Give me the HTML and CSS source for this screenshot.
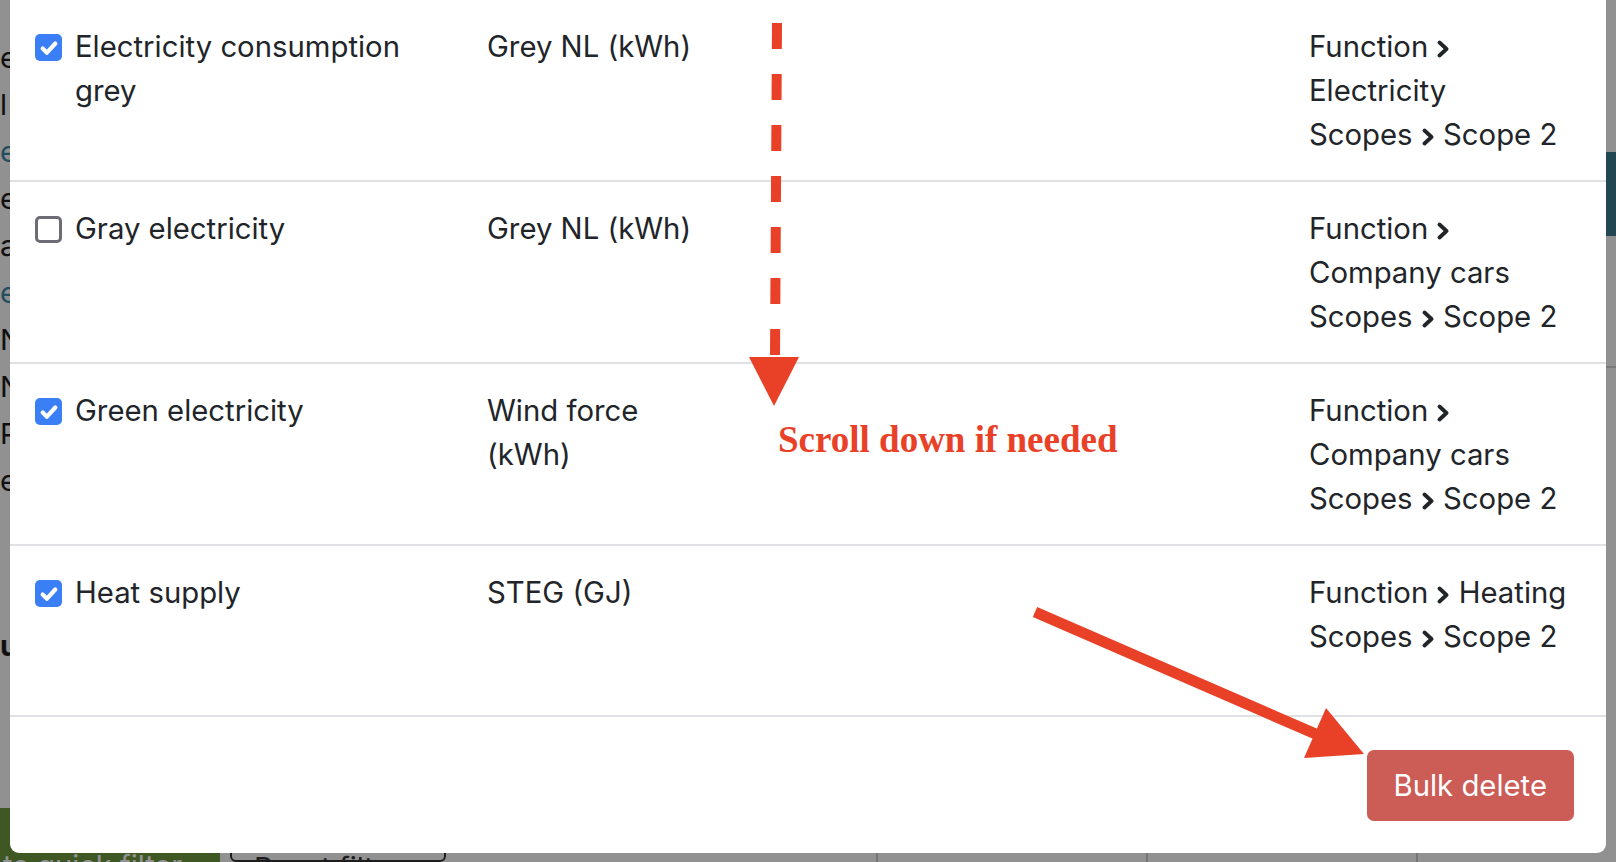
FILE: index.html
```html
<!DOCTYPE html>
<html lang="en">
<head>
<meta charset="utf-8">
<title>Bulk delete</title>
<link rel="stylesheet" href="styles.css">
</head>
<body>
<div class="page">
  <div class="page-main">
    <ul class="labels">
      <li>e</li>
      <li>l</li>
      <li class="link">e</li>
      <li>e</li>
      <li>as</li>
      <li class="link">e</li>
      <li>N</li>
      <li>N</li>
      <li>PC</li>
      <li>et</li>
      <li class="gap"></li>
      <li class="strong">u</li>
    </ul>
    <div class="page-fill"></div>
    <div class="page-right">
      <div class="teal"></div>
      <div class="rule"></div>
    </div>
  </div>
  <div class="toolbar">
    <span class="btn-green">Create quick filter</span>
    <span class="btn-reset">Reset filters</span>
    <span class="cell"></span>
    <span class="cell"></span>
    <span class="cell"></span>
  </div>
</div>

<div class="backdrop"></div>

<div class="modal">
  <div class="modal-body">
    <div class="row">
      <div class="name"><span class="check on"><svg viewBox="0 0 16 16"><path d="M3.8 8.3l2.8 2.8 5.6-6.1"/></svg></span><span class="label">Electricity consumption grey</span></div>
      <div class="src"><span class="src-text">Grey NL (kWh)</span></div>
      <div class="tags">
        <div class="tag">Function <svg class="chev" viewBox="0 0 14 18"><path d="M3.5 2.5l7 6.5-7 6.5"/></svg> Electricity</div>
        <div class="tag">Scopes <svg class="chev" viewBox="0 0 14 18"><path d="M3.5 2.5l7 6.5-7 6.5"/></svg> Scope 2</div>
      </div>
    </div>
    <div class="row">
      <div class="name"><span class="check"></span><span class="label">Gray electricity</span></div>
      <div class="src"><span class="src-text">Grey NL (kWh)</span></div>
      <div class="tags">
        <div class="tag">Function <svg class="chev" viewBox="0 0 14 18"><path d="M3.5 2.5l7 6.5-7 6.5"/></svg> Company cars</div>
        <div class="tag">Scopes <svg class="chev" viewBox="0 0 14 18"><path d="M3.5 2.5l7 6.5-7 6.5"/></svg> Scope 2</div>
      </div>
    </div>
    <div class="row">
      <div class="name"><span class="check on"><svg viewBox="0 0 16 16"><path d="M3.8 8.3l2.8 2.8 5.6-6.1"/></svg></span><span class="label">Green electricity</span></div>
      <div class="src"><span class="src-text">Wind force (kWh)</span></div>
      <div class="tags">
        <div class="tag">Function <svg class="chev" viewBox="0 0 14 18"><path d="M3.5 2.5l7 6.5-7 6.5"/></svg> Company cars</div>
        <div class="tag">Scopes <svg class="chev" viewBox="0 0 14 18"><path d="M3.5 2.5l7 6.5-7 6.5"/></svg> Scope 2</div>
      </div>
    </div>
    <div class="row last">
      <div class="name"><span class="check on"><svg viewBox="0 0 16 16"><path d="M3.8 8.3l2.8 2.8 5.6-6.1"/></svg></span><span class="label">Heat supply</span></div>
      <div class="src"><span class="src-text">STEG (GJ)</span></div>
      <div class="tags">
        <div class="tag">Function <svg class="chev" viewBox="0 0 14 18"><path d="M3.5 2.5l7 6.5-7 6.5"/></svg> Heating</div>
        <div class="tag">Scopes <svg class="chev" viewBox="0 0 14 18"><path d="M3.5 2.5l7 6.5-7 6.5"/></svg> Scope 2</div>
      </div>
    </div>
  </div>
  <div class="modal-footer">
    <button class="btn-danger" type="button">Bulk delete</button>
  </div>
</div>

<svg class="annot" viewBox="0 0 1616 862" width="1616" height="862">
  <line x1="777" y1="23" x2="775" y2="356" stroke="#e94128" stroke-width="10" stroke-dasharray="26 25"/>
  <polygon points="749,357 799,357 774,406" fill="#e94128"/>
  <line x1="1035" y1="612" x2="1318" y2="735" stroke="#e94128" stroke-width="11"/>
  <polygon points="1304,758 1326,708 1364,754" fill="#e94128"/>
</svg>
<div class="annot-text">Scroll down if needed</div>
</body>
</html>
```

FILE: styles.css
```css
* { box-sizing: border-box; }

html, body {
  margin: 0;
  padding: 0;
  width: 1616px;
  height: 862px;
  overflow: hidden;
}

body {
  font-family: Inter, "Liberation Sans", "Noto Sans", sans-serif;
  color: #212529;
  background: #ffffff;
}

/* ---------- underlying page ---------- */
.page {
  width: 1616px;
  height: 862px;
  display: flex;
  flex-direction: column;
  background: #ffffff;
}

.page-main {
  flex: 1;
  display: flex;
}

.labels {
  list-style: none;
  margin: 0;
  padding: 34px 0 0 0;
  width: 40px;
  font-size: 29px;
  line-height: 47px;
  color: #1d1d1d;
}

.labels li { height: 47px; white-space: nowrap; }
.labels li.link { color: #3d8aa8; }
.labels li.gap { height: 118px; }
.labels li.strong { font-weight: 700; }

.page-fill { flex: 1; }

.page-right {
  width: 10px;
  padding-top: 152px;
}

.teal {
  height: 84px;
  background: #3f7d91;
}

.rule {
  margin-top: 130px;
  height: 2px;
  background: #d5d5d5;
}

.toolbar {
  height: 54px;
  display: flex;
  align-items: stretch;
  gap: 10px;
}

.btn-green {
  width: 220px;
  background: #6f9a3f;
  color: #ffffff;
  font-size: 29px;
  padding: 40px 0 0 0;
  text-indent: -62px;
  white-space: nowrap;
  overflow: hidden;
}

.btn-reset {
  width: 216px;
  border: 2px solid #333;
  border-radius: 6px;
  color: #333;
  font-size: 29px;
  padding: 40px 0 0 22px;
  white-space: nowrap;
  overflow: hidden;
}

.cell {
  width: 200px;
  border-left: 2px solid #cfcfcf;
  margin-left: 420px;
}
.cell + .cell { margin-left: 60px; }

.backdrop {
  position: fixed;
  inset: 0;
  background: rgba(0, 0, 0, 0.43);
}

/* ---------- modal ---------- */
.modal {
  position: absolute;
  left: 10px;
  top: 0;
  width: 1596px;
  height: 853px;
  background: #ffffff;
  border-radius: 0 0 9px 9px;
  display: flex;
  flex-direction: column;
  overflow: hidden;
}

.modal-body {
  height: 715px;
  overflow: hidden;
}

.row {
  display: grid;
  grid-template-columns: 400px 1fr 268px;
  column-gap: 52px;
  padding: 25px 29px 23px 25px;
  border-bottom: 2px solid #dfe1e5;
  font-size: 29.3px;
  line-height: 44px;
}

.row.last { border-bottom: none; }

.name {
  display: flex;
  align-items: flex-start;
  gap: 13px;
}

.label { flex: 1; }

.check {
  flex: none;
  width: 27px;
  height: 27px;
  margin-top: 9px;
  border-radius: 5px;
  border: 3px solid #6d6c76;
  background: #ffffff;
  display: flex;
  align-items: center;
  justify-content: center;
}

.check.on {
  border: none;
  background: #3b7ff6;
}

.check svg {
  width: 24px;
  height: 24px;
  fill: none;
  stroke: #ffffff;
  stroke-width: 2.8;
  stroke-linecap: round;
  stroke-linejoin: round;
}

.src-text {
  display: block;
  max-width: 212px;
}

.chev {
  width: 14px;
  height: 18px;
  vertical-align: -1px;
  fill: none;
  stroke: #212529;
  stroke-width: 3.8;
  stroke-linecap: round;
  stroke-linejoin: round;
}

.modal-footer {
  border-top: 2px solid #dfe1e5;
  padding: 33px 32px 32px;
  display: flex;
  justify-content: flex-end;
}

.btn-danger {
  height: 71px;
  padding: 0 27px;
  border: none;
  border-radius: 7px;
  background: #cc5c56;
  color: #ffffff;
  font-family: Inter, "Liberation Sans", sans-serif;
  font-size: 29.3px;
  line-height: 44px;
}

/* ---------- annotations ---------- */
.annot {
  position: absolute;
  left: 0;
  top: 0;
  pointer-events: none;
}

.annot-text {
  position: absolute;
  left: 778px;
  top: 421px;
  font-family: "Liberation Serif", "DejaVu Serif", serif;
  font-weight: 700;
  font-size: 37px;
  line-height: 1;
  color: #e94128;
  white-space: nowrap;
}
```
